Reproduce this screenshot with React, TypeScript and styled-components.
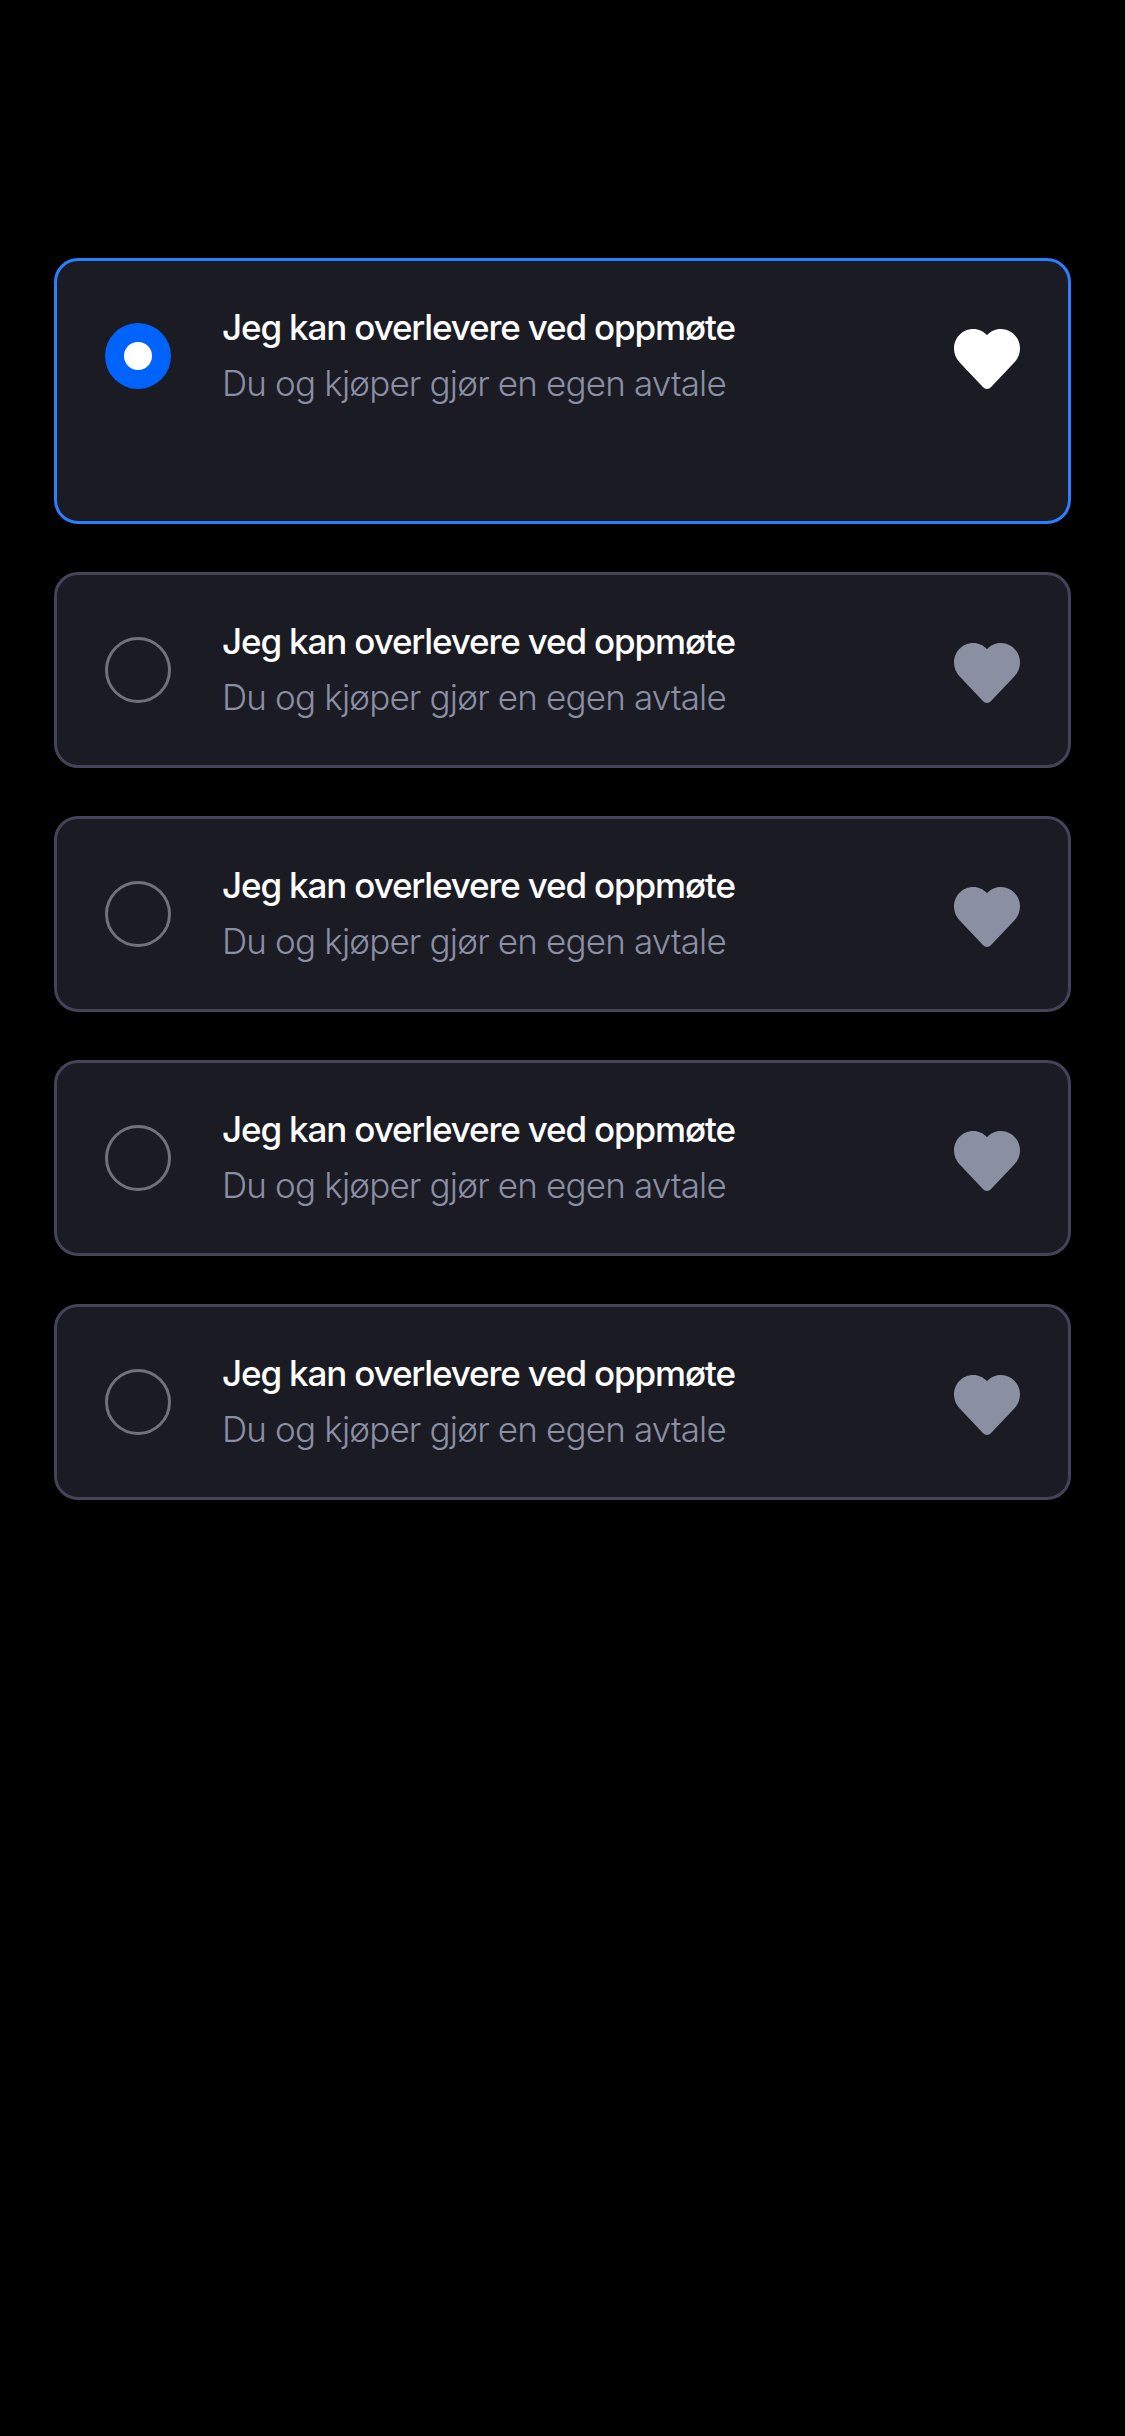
import React, { useState } from "react";
import styled, { createGlobalStyle } from "styled-components";

const GlobalStyle = createGlobalStyle`
  * { box-sizing: border-box; }
  body { margin: 0; background: #000; }
`;

const Screen = styled.main`
  min-height: 2436px;
  padding: 258px 54px 0;
  display: flex;
  flex-direction: column;
  gap: 48px;
  background: #000;
  font-family: Inter, "Liberation Sans", sans-serif;
`;

const Card = styled.section<{ $selected: boolean }>`
  display: flex;
  align-items: flex-start;
  height: ${(p) => (p.$selected ? 266 : 196)}px;
  padding: 38px 48px 0;
  border: 3px solid ${(p) => (p.$selected ? "#2b7fff" : "#44435a")};
  border-radius: 24px;
  background: #1b1b24;
  cursor: pointer;
`;

const Radio = styled.span<{ $selected: boolean }>`
  display: flex;
  align-items: center;
  justify-content: center;
  flex: none;
  width: 66px;
  height: 66px;
  margin-top: 24px;
  border-radius: 50%;
  border: ${(p) => (p.$selected ? "none" : "3px solid #71717a")};
  background: ${(p) => (p.$selected ? "#0063fb" : "transparent")};
`;

const Dot = styled.span`
  width: 28px;
  height: 28px;
  border-radius: 50%;
  background: #fff;
`;

const Copy = styled.div`
  flex: 1;
  padding-left: 51px;
  font-size: 35px;
  line-height: 56px;
  white-space: nowrap;
`;

const Title = styled.div`
  font-weight: 500;
  letter-spacing: -1.15px;
  color: #fff;
`;

const Subtitle = styled.div`
  font-weight: 300;
  letter-spacing: -0.84px;
  color: #8a8fa3;
`;

const Heart = styled.svg<{ $selected: boolean }>`
  flex: none;
  width: 66px;
  height: 60px;
  margin-top: 30px;
  fill: ${(p) => (p.$selected ? "#fff" : "#8a8fa1")};
`;

const options = [1, 2, 3, 4, 5].map((id) => ({
  id,
  title: "Jeg kan overlevere ved oppmøte",
  subtitle: "Du og kjøper gjør en egen avtale",
}));

export default function App() {
  const [selectedId, setSelectedId] = useState(1);

  return (
    <>
      <GlobalStyle />
      <Screen>
        {options.map((option) => {
          const selected = option.id === selectedId;
          return (
            <Card key={option.id} $selected={selected} onClick={() => setSelectedId(option.id)}>
              <Radio $selected={selected} role="radio" aria-checked={selected}>
                {selected && <Dot />}
              </Radio>
              <Copy>
                <Title>{option.title}</Title>
                <Subtitle>{option.subtitle}</Subtitle>
              </Copy>
              <Heart $selected={selected} viewBox="0 0 66 60" aria-hidden="true">
                <path d="M33 6.2C29.6 2.4 24.8 0 19.3 0C8.6 0 0 8.7 0 19.5C0 25 2.2 29.8 5.7 33.6L28.9 58C31.2 60.6 34.8 60.6 37.1 58L60.3 33.6C63.8 29.8 66 25 66 19.5C66 8.7 57.4 0 46.7 0C41.2 0 36.4 2.4 33 6.2Z" />
              </Heart>
            </Card>
          );
        })}
      </Screen>
    </>
  );
}
